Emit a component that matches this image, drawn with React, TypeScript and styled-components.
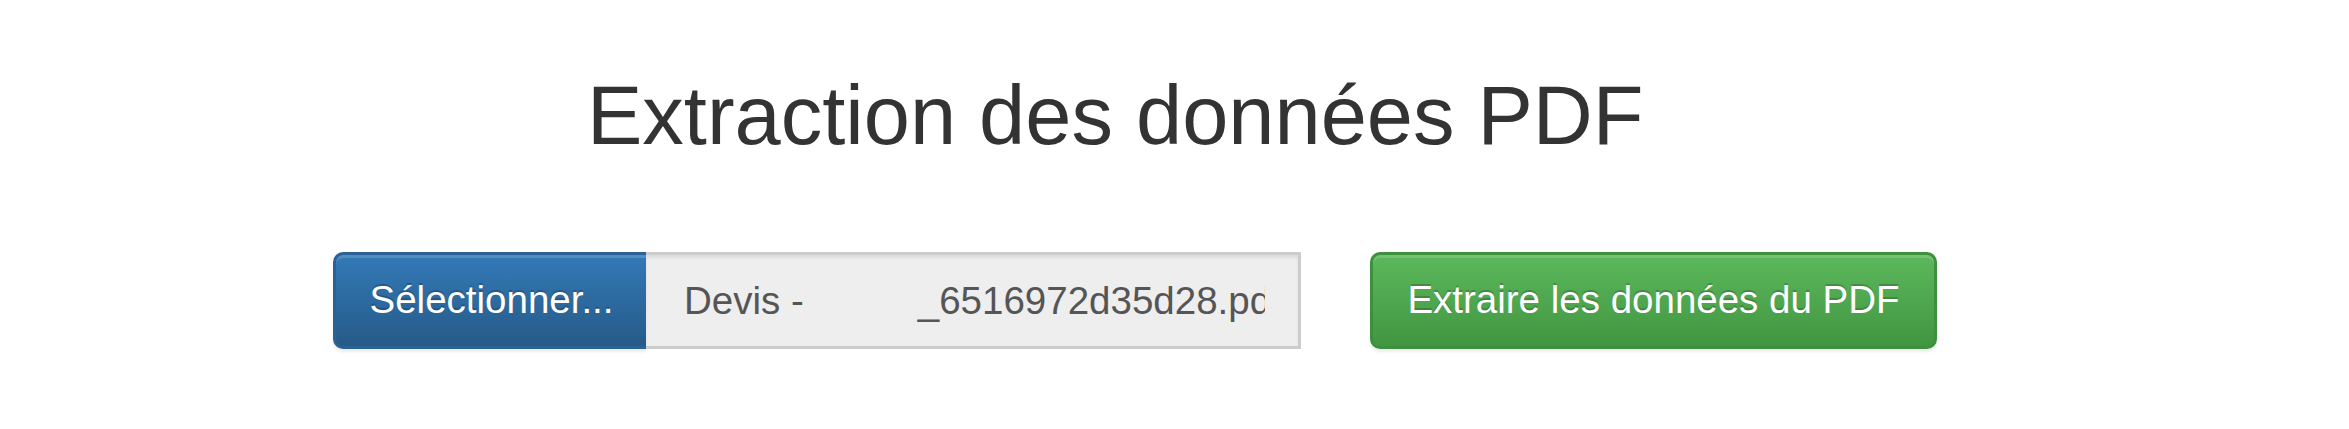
import React from "react";
import styled, { createGlobalStyle } from "styled-components";

const GlobalStyle = createGlobalStyle`
  html, body {
    margin: 0;
    padding: 0;
    background: #ffffff;
  }
  body {
    font-family: "Liberation Sans", Arial, Helvetica, sans-serif;
    color: #333333;
  }
  * { box-sizing: border-box; }
`;

const Page = styled.main`
  width: 2349px;
  height: 429px;
  padding-top: 70px;
  overflow: hidden;
`;

const Title = styled.h1`
  margin: 0;
  padding-left: 587px;
  font-size: 83px;
  line-height: 91px;
  font-weight: 400;
  color: #333333;
  white-space: nowrap;
`;

const FormRow = styled.form`
  display: flex;
  align-items: stretch;
  gap: 69px;
  margin-top: 91px;
  padding-left: 333px;
`;

const InputGroup = styled.div`
  display: flex;
  height: 97px;
`;

const Button = styled.button<{ $variant: "primary" | "success"; $attached?: boolean }>`
  height: 97px;
  padding: 0 33px;
  font-family: "Liberation Sans", Arial, Helvetica, sans-serif;
  font-size: 38.5px;
  line-height: 1;
  color: #ffffff;
  white-space: nowrap;
  cursor: pointer;
  text-shadow: 0 -2px 0 rgba(0, 0, 0, 0.2);
  border: 3px solid
    ${(p) => (p.$variant === "primary" ? "#2a6298" : "#3e8f3e")};
  border-right-width: ${(p) => (p.$attached ? "0" : "3px")};
  border-radius: ${(p) => (p.$attached ? "10px 0 0 10px" : "10px")};
  background-image: ${(p) =>
    p.$variant === "primary"
      ? "linear-gradient(to bottom, #337ab7 0%, #265a88 100%)"
      : "linear-gradient(to bottom, #5cb85c 0%, #419641 100%)"};
  box-shadow: inset 0 3px 0 rgba(255, 255, 255, 0.15),
    0 3px 3px rgba(0, 0, 0, 0.075);
`;

const SelectButton = styled(Button)`
  width: 313px;
  padding: 0 32px 0 33px;
`;

const ExtractButton = styled(Button)`
  width: 567px;
  padding: 0 30px;
`;

const FileField = styled.div`
  width: 655px;
  height: 97px;
  display: flex;
  align-items: center;
  padding: 0 33px 0 38px;
  background: #eeeeee;
  border: 3px solid #cccccc;
  border-left: none;
  box-shadow: inset 0 3px 3px rgba(0, 0, 0, 0.075);
`;

const FileText = styled.div`
  flex: 1;
  display: flex;
  overflow: hidden;
  font-size: 38.5px;
  line-height: 48px;
  color: #555555;
  white-space: pre;
`;

const Redacted = styled.span`
  display: inline-block;
  flex: none;
  width: 114px;
`;

const FilePart = styled.span`
  flex: none;
`;

export default function App() {
  return (
    <>
      <GlobalStyle />
      <Page>
        <Title>Extraction des données PDF</Title>
        <FormRow onSubmit={(e) => e.preventDefault()}>
          <InputGroup>
            <SelectButton type="button" $variant="primary" $attached>
              Sélectionner...
            </SelectButton>
            <FileField>
              <FileText>
                <FilePart>Devis -</FilePart>
                <Redacted />
                <FilePart>_6516972d35d28.pdf</FilePart>
              </FileText>
            </FileField>
          </InputGroup>
          <ExtractButton type="submit" $variant="success">
            Extraire les données du PDF
          </ExtractButton>
        </FormRow>
      </Page>
    </>
  );
}
